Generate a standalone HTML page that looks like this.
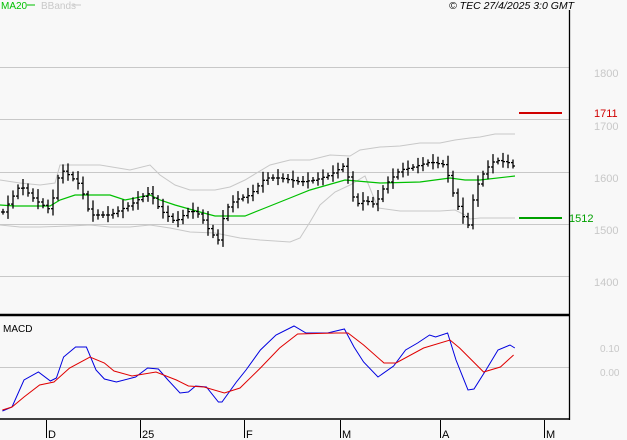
<!DOCTYPE html>
<html><head><meta charset="utf-8"><style>
html,body{margin:0;padding:0;background:#f8f8f8;}
svg{display:block;font-family:"Liberation Sans",sans-serif;}
</style></head><body>
<svg id="s" width="627" height="440" viewBox="0 0 627 440" xmlns="http://www.w3.org/2000/svg">
<rect width="627" height="440" fill="#f8f8f8"/>
<text x="1" y="9" font-size="10" fill="#00c000">MA20</text>
<line x1="27" y1="5" x2="35" y2="5" stroke="#00c000" stroke-width="1"/>
<text x="41" y="9" font-size="10" fill="#c8c8c8">BBands</text>
<line x1="73" y1="5" x2="81" y2="5" stroke="#c8c8c8"/>
<text x="449" y="9" font-size="10.5" font-style="italic" fill="#000">© TEC 27/4/2025 3:0 GMT</text>
<g stroke="#c8c8c8" stroke-width="1">
<line x1="0" y1="67.5" x2="569" y2="67.5"/>
<line x1="0" y1="119.5" x2="569" y2="119.5"/>
<line x1="0" y1="172.5" x2="569" y2="172.5"/>
<line x1="0" y1="224.5" x2="569" y2="224.5"/>
<line x1="0" y1="276.5" x2="569" y2="276.5"/>
<line x1="0" y1="367.5" x2="569" y2="367.5"/>
</g>
<g font-size="11" fill="#c8c8c8">
<text x="594" y="77">1800</text>
<text x="594" y="130">1700</text>
<text x="594" y="182">1600</text>
<text x="594" y="234">1500</text>
<text x="594" y="286">1400</text>
<text x="600" y="352" font-size="10">0.10</text>
<text x="600" y="376" font-size="10">0.00</text>
</g>
<line x1="519" y1="113" x2="562" y2="113" stroke="#d00000" stroke-width="2"/>
<text x="594" y="117" font-size="11" fill="#d00000">1711</text>
<line x1="519" y1="218" x2="562" y2="218" stroke="#00a000" stroke-width="2"/>
<text x="569" y="222" font-size="11" fill="#00a000">1512</text>
<polyline fill="none" stroke="#c8c8c8" points="0,180 20,183 40,185 55,183 60,165 65,165 100,165 130,170 150,165 160,175 175,185 190,190 215,190 230,187 245,180 270,165 290,160 310,160 330,155 350,156 360,150 380,147 400,146 420,143 440,143 455,140 470,138 480,137 495,134 515,134"/>
<polyline fill="none" stroke="#c8c8c8" points="0,225 20,227 40,227 70,226 90,225 110,227 130,227 150,225 170,228 190,232 215,233 240,238 260,240 290,242 300,238 310,222 320,205 335,192 350,185 365,176 378,208 400,211 440,211 455,210 465,215 470,219 480,218 515,218"/>
<polyline fill="none" stroke="#00c000" stroke-width="1.2" points="0,205 15,206 50,206 60,200 75,195 110,195 125,200 150,195 160,200 175,205 200,212 215,216 245,216 265,208 290,198 310,190 345,180 380,183 420,182 450,178 465,180 480,180 515,176"/>
<g id="bars" stroke="#000" stroke-width="1.3"></g>
<line x1="0" y1="315" x2="569" y2="315" stroke="#000" stroke-width="2.5"/>
<text x="3" y="332" font-size="10" fill="#000">MACD</text>
<g transform="scale(1.2 1)">
<polyline fill="none" stroke="#0000e0" vector-effect="non-scaling-stroke" points="2,411 10,407 20,380 32,372 42,381 47,378 53,357 63,347 72,347 80,370 87,379 97,382 113,377 123,368 132,369 140,380 150,393 157,392 163,386 172,387 182,402 185,402 197,382 205,370 217,350 230,335 245,326 255,333 273,333 287,329 295,347 303,362 315,377 328,366 338,350 348,343 358,335 363,337 373,333 380,360 390,390 395,389 405,370 415,350 425,345 429,348"/>
<polyline fill="none" stroke="#e00000" vector-effect="non-scaling-stroke" points="2,410 10,407 20,397 33,385 45,382 58,368 75,357 87,363 95,371 110,376 130,372 147,380 157,386 170,387 187,393 200,388 217,368 233,348 248,334 280,333 290,333 303,345 320,363 330,363 353,348 375,340 383,348 403,372 417,367 428,355"/>
</g>
<line x1="0" y1="419" x2="570" y2="419" stroke="#000" stroke-width="1.5"/>
<line x1="569.5" y1="10" x2="569.5" y2="420" stroke="#000" stroke-width="1.3"/>
<g stroke="#000">
<line x1="46.5" y1="420" x2="46.5" y2="438"/>
<line x1="140.5" y1="420" x2="140.5" y2="438"/>
<line x1="244.5" y1="420" x2="244.5" y2="438"/>
<line x1="340.5" y1="420" x2="340.5" y2="438"/>
<line x1="440.5" y1="420" x2="440.5" y2="438"/>
<line x1="544.5" y1="420" x2="544.5" y2="438"/>
</g>
<g font-size="11" fill="#000">
<text x="48" y="438">D</text><text x="142" y="438">25</text><text x="246" y="438">F</text>
<text x="342" y="438">M</text><text x="442" y="438">A</text><text x="546" y="438">M</text>
</g>
</svg>
<script>
var k=[[3,212],[20,185],[35,200],[50,210],[60,170],[65,172],[80,185],[90,215],[110,215],[130,205],[145,195],[150,193],[160,210],[175,222],[190,210],[200,215],[210,232],[218,240],[225,210],[235,200],[250,195],[265,178],[280,178],[300,182],[315,180],[330,175],[345,165],[350,185],[355,205],[365,200],[375,205],[385,185],[400,170],[410,168],[430,162],[445,165],[455,200],[462,215],[468,225],[475,190],[485,170],[495,160],[510,163],[515,168]];
function f(x){for(var i=1;i<k.length;i++){if(x<=k[i][0]){var a=k[i-1],b=k[i];return a[1]+(b[1]-a[1])*(x-a[0])/(b[0]-a[0]);}}return k[k.length-1][1];}
var g=document.getElementById('bars'),h='',p=f(3);
for(var x=3;x<=515;x+=5){var c=f(x),o=p,n=(Math.sin(x*1.7)+1)*3+3;var hi=Math.min(o,c)-n,lo=Math.max(o,c)+n*0.8;
h+='<line x1="'+x+'" y1="'+hi.toFixed(1)+'" x2="'+x+'" y2="'+lo.toFixed(1)+'"/>';
h+='<line x1="'+(x-2)+'" y1="'+o.toFixed(1)+'" x2="'+x+'" y2="'+o.toFixed(1)+'"/>';
h+='<line x1="'+x+'" y1="'+c.toFixed(1)+'" x2="'+(x+2)+'" y2="'+c.toFixed(1)+'"/>';p=c;}
g.innerHTML=h;
</script>
</body></html>
